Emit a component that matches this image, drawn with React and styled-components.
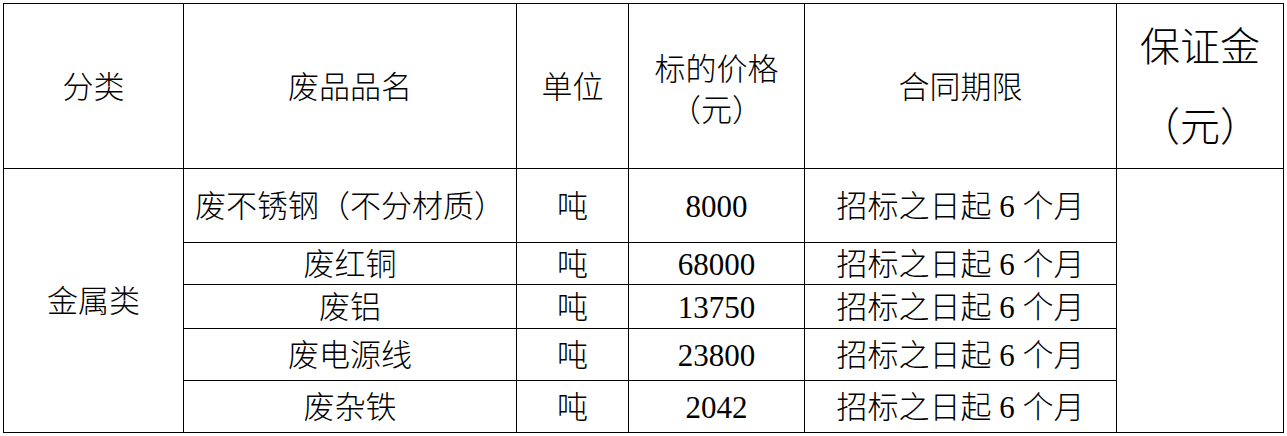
import React from "react";
import styled, { createGlobalStyle } from "styled-components";

const GlobalStyle = createGlobalStyle`
  html, body {
    margin: 0;
    padding: 0;
    background: #ffffff;
  }
  body {
    font-family: "Liberation Serif", "Noto Sans CJK SC", serif;
    color: #000000;
  }
`;

const Page = styled.div`
  padding: 3px 0 0 3px;
`;

const Grid = styled.div`
  display: grid;
  grid-template-columns: 180px 333px 112px 176px 312px 167px;
  grid-template-rows: 165px 74px 42px 44px 52px 52px;
  width: max-content;
  border-top: 1px solid #000;
  border-left: 1px solid #000;
`;

const Cell = styled.div`
  box-sizing: border-box;
  display: flex;
  flex-direction: column;
  align-items: center;
  justify-content: center;
  border-right: 1px solid #000;
  border-bottom: 1px solid #000;
  padding-top: ${(p) => p.$shift || 3}px;
  font-size: ${(p) => p.$size || 31}px;
  line-height: ${(p) => p.$lh || 36}px;
  font-weight: 300;
  text-align: center;
  white-space: nowrap;
  grid-column: ${(p) => p.$col || "auto"};
  grid-row: ${(p) => p.$row || "auto"};
`;

const rows = [
  { name: "废不锈钢（不分材质）", price: "8000" },
  { name: "废红铜", price: "68000" },
  { name: "废铝", price: "13750" },
  { name: "废电源线", price: "23800" },
  { name: "废杂铁", price: "2042" },
];

export default function App() {
  return (
    <>
      <GlobalStyle />
      <Page>
        <Grid>
          <Cell>分类</Cell>
          <Cell>废品品名</Cell>
          <Cell>单位</Cell>
          <Cell $lh={41} $shift={8}>
            <span>标的价格</span>
            <span>（元）</span>
          </Cell>
          <Cell>合同期限</Cell>
          <Cell $size={40} $lh={80} $shift={4}>
            <span>保证金</span>
            <span>（元）</span>
          </Cell>
          <Cell $col="1" $row="2 / span 5">
            金属类
          </Cell>
          <Cell $col="6" $row="2 / span 5" />
          {rows.map((r) => (
            <React.Fragment key={r.name}>
              <Cell>{r.name}</Cell>
              <Cell>吨</Cell>
              <Cell>{r.price}</Cell>
              <Cell>招标之日起 6 个月</Cell>
            </React.Fragment>
          ))}
        </Grid>
      </Page>
    </>
  );
}
